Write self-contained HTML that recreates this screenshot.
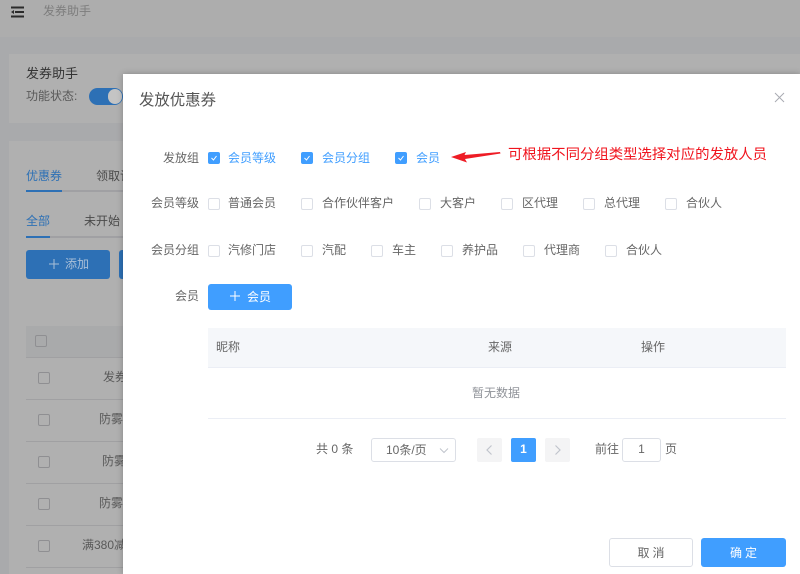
<!DOCTYPE html>
<html lang="zh"><head><meta charset="utf-8"><title>发券助手</title>
<style>
html,body{margin:0;padding:0;width:800px;height:574px;overflow:hidden;background:#a9aaac}
body{position:relative;font-family:"Liberation Sans","Noto Sans CJK SC",sans-serif;font-size:12px;color:#666}
.a{position:absolute;white-space:nowrap}
.t{position:absolute;white-space:nowrap;line-height:16px;height:16px}
.cb{position:absolute;width:10px;height:10px;border:1px solid #dcdfe6;border-radius:2px;background:#fff}
.cb.on{background:#409eff;border-color:#409eff}
.cb.on svg{position:absolute;left:-1px;top:-1px}
.bg{position:absolute;width:10px;height:10px;border:1px solid #8f8f92;border-radius:2px}
.blue{color:#409eff}
.line{position:absolute;height:1px;background:#a0a0a2;left:26px;width:100px}
</style></head><body>
<!-- background -->
<div class="a" style="left:0;top:0;width:800px;height:37px;background:#adadad"></div>
<svg class="a" style="left:10px;top:6px" width="15" height="12"><path d="M1 1.5H14M5 6H14M1 10.5H14" stroke="#2b2b2b" stroke-width="2" fill="none"/><path d="M1 6L4 4V8Z" fill="#2b2b2b"/></svg>
<div class="t" style="left:43px;top:3px;color:#7d7d7d">发券助手</div>
<div class="a" style="left:9px;top:54px;width:791px;height:69px;background:#b0b0b0"></div>
<div class="t" style="left:26px;top:66px;color:#333;font-size:13px">发券助手</div>
<div class="t" style="left:26px;top:88px;color:#595959">功能状态:</div>
<div class="a" style="left:89px;top:88px;width:34px;height:17px;border-radius:9px;background:#2d70b5"></div>
<div class="a" style="left:108px;top:89px;width:14px;height:15px;border-radius:8px;background:#c4c4c4"></div>
<div class="a" style="left:9px;top:141px;width:791px;height:433px;background:#b0b0b0"></div>
<div class="t" style="left:26px;top:168px;color:#2d70b5">优惠券</div>
<div class="t" style="left:96px;top:168px;color:#4a4a4a">领取记录</div>
<div class="a" style="left:26px;top:190px;width:97px;height:2px;background:#a0a0a3"></div>
<div class="a" style="left:26px;top:190px;width:36px;height:2px;background:#2d70b5"></div>
<div class="t" style="left:26px;top:213px;color:#2d70b5">全部</div>
<div class="t" style="left:84px;top:213px;color:#4a4a4a">未开始</div>
<div class="a" style="left:26px;top:236px;width:97px;height:2px;background:#a0a0a3"></div>
<div class="a" style="left:26px;top:236px;width:24px;height:2px;background:#2d70b5"></div>
<div class="a" style="left:26px;top:250px;width:84px;height:29px;border-radius:3px;background:#2d70b5"></div>
<svg class="a" style="left:48px;top:258px" width="12" height="12"><path d="M6 1V11M1 6H11" stroke="#a9bfd8" stroke-width="1" fill="none"/></svg>
<div class="t" style="left:65px;top:256px;color:#a9bfd8">添加</div>
<div class="a" style="left:119px;top:250px;width:10px;height:29px;border-radius:3px 0 0 3px;background:#2d70b5"></div>
<div class="a" style="left:26px;top:326px;width:100px;height:31px;background:#a9aaab"></div>
<div class="bg" style="left:35px;top:335px"></div>
<div class="line" style="top:357px"></div>
<div class="line" style="top:399px"></div>
<div class="line" style="top:441px"></div>
<div class="line" style="top:483px"></div>
<div class="line" style="top:525px"></div>
<div class="line" style="top:567px"></div>
<div class="bg" style="left:38px;top:372px"></div>
<div class="bg" style="left:38px;top:414px"></div>
<div class="bg" style="left:38px;top:456px"></div>
<div class="bg" style="left:38px;top:498px"></div>
<div class="bg" style="left:38px;top:540px"></div>
<div class="t" style="left:103px;top:369px;color:#595959">发券</div>
<div class="t" style="left:99px;top:411px;color:#595959">防雾</div>
<div class="t" style="left:102px;top:453px;color:#595959">防雾</div>
<div class="t" style="left:99px;top:495px;color:#595959">防雾</div>
<div class="t" style="left:82px;top:537px;color:#595959">满380减</div>

<!-- dialog -->
<div class="a" style="left:123px;top:74px;width:677px;height:500px;background:#fff;box-shadow:0 0 6px rgba(0,0,0,.25)"></div>
<div class="t" style="left:139px;top:92px;font-size:15.4px;line-height:18px;height:18px;color:#555">发放优惠券</div>
<svg class="a" style="left:774px;top:92px" width="11" height="11"><path d="M1 1L10 10M10 1L1 10" stroke="#a9abb2" stroke-width="1" fill="none"/></svg>

<div class="t" style="left:163px;top:150px">发放组</div>
<div class="cb on" style="left:208px;top:152px"><svg width="12" height="12"><path d="M3.5 6L5.5 8L8.5 4" stroke="#fff" stroke-width="1" fill="none"/></svg></div>
<div class="t blue" style="left:228px;top:150px">会员等级</div>
<div class="cb on" style="left:301px;top:152px"><svg width="12" height="12"><path d="M3.5 6L5.5 8L8.5 4" stroke="#fff" stroke-width="1" fill="none"/></svg></div>
<div class="t blue" style="left:322px;top:150px">会员分组</div>
<div class="cb on" style="left:395px;top:152px"><svg width="12" height="12"><path d="M3.5 6L5.5 8L8.5 4" stroke="#fff" stroke-width="1" fill="none"/></svg></div>
<div class="t blue" style="left:416px;top:150px">会员</div>
<svg class="a" style="left:450px;top:148px" width="54" height="16"><path d="M1 9L16 4L14.5 7L50 4L50.5 5.5L15 11L17 14.5Z" fill="#ee1c25"/></svg>
<div class="t" style="left:508px;top:147px;font-size:14.4px;color:#f0141e">可根据不同分组类型选择对应的发放人员</div>

<div class="t" style="left:151px;top:195px">会员等级</div>
<div class="cb" style="left:208px;top:198px"></div><div class="t" style="left:228px;top:195px">普通会员</div>
<div class="cb" style="left:301px;top:198px"></div><div class="t" style="left:322px;top:195px">合作伙伴客户</div>
<div class="cb" style="left:419px;top:198px"></div><div class="t" style="left:440px;top:195px">大客户</div>
<div class="cb" style="left:501px;top:198px"></div><div class="t" style="left:522px;top:195px">区代理</div>
<div class="cb" style="left:583px;top:198px"></div><div class="t" style="left:604px;top:195px">总代理</div>
<div class="cb" style="left:665px;top:198px"></div><div class="t" style="left:686px;top:195px">合伙人</div>

<div class="t" style="left:151px;top:242px">会员分组</div>
<div class="cb" style="left:208px;top:245px"></div><div class="t" style="left:228px;top:242px">汽修门店</div>
<div class="cb" style="left:301px;top:245px"></div><div class="t" style="left:322px;top:242px">汽配</div>
<div class="cb" style="left:371px;top:245px"></div><div class="t" style="left:392px;top:242px">车主</div>
<div class="cb" style="left:441px;top:245px"></div><div class="t" style="left:462px;top:242px">养护品</div>
<div class="cb" style="left:523px;top:245px"></div><div class="t" style="left:544px;top:242px">代理商</div>
<div class="cb" style="left:605px;top:245px"></div><div class="t" style="left:626px;top:242px">合伙人</div>

<div class="t" style="left:175px;top:288px">会员</div>
<div class="a" style="left:208px;top:284px;width:84px;height:26px;border-radius:3px;background:#409eff"></div>
<svg class="a" style="left:229px;top:290px" width="12" height="12"><path d="M6 1V11M1 6H11" stroke="#fff" stroke-width="1" fill="none"/></svg>
<div class="t" style="left:247px;top:289px;color:#fff">会员</div>

<div class="a" style="left:208px;top:328px;width:578px;height:39px;background:#f5f7fa"></div>
<div class="a" style="left:208px;top:367px;width:578px;height:1px;background:#ebeef5"></div>
<div class="t" style="left:216px;top:339px">昵称</div>
<div class="t" style="left:488px;top:339px">来源</div>
<div class="t" style="left:641px;top:339px">操作</div>
<div class="t" style="left:472px;top:385px;color:#909399">暂无数据</div>
<div class="a" style="left:208px;top:418px;width:578px;height:1px;background:#ebeef5"></div>

<div class="t" style="left:316px;top:441px">共 0 条</div>
<div class="a" style="left:371px;top:438px;width:83px;height:22px;border:1px solid #dcdfe6;border-radius:3px"></div>
<div class="t" style="left:386px;top:442px">10条/页</div>
<svg class="a" style="left:439px;top:447px" width="10" height="8"><path d="M1 1.5L5 5.5L9 1.5" stroke="#c0c4cc" stroke-width="1" fill="none"/></svg>
<div class="a" style="left:477px;top:438px;width:25px;height:24px;background:#f4f4f5;border-radius:2px"></div>
<svg class="a" style="left:485px;top:444px" width="9" height="12"><path d="M6.5 1.5L2 6L6.5 10.5" stroke="#c0c4cc" stroke-width="1.2" fill="none"/></svg>
<div class="a" style="left:511px;top:438px;width:25px;height:24px;background:#409eff;border-radius:2px;color:#fff;font-weight:bold;text-align:center;line-height:23px">1</div>
<div class="a" style="left:545px;top:438px;width:25px;height:24px;background:#f4f4f5;border-radius:2px"></div>
<svg class="a" style="left:553px;top:444px" width="9" height="12"><path d="M2.5 1.5L7 6L2.5 10.5" stroke="#c0c4cc" stroke-width="1.2" fill="none"/></svg>
<div class="t" style="left:595px;top:441px">前往</div>
<div class="a" style="left:622px;top:438px;width:37px;height:22px;border:1px solid #dcdfe6;border-radius:3px;text-align:center;line-height:21px">1</div>
<div class="t" style="left:665px;top:441px">页</div>

<div class="a" style="left:609px;top:538px;width:82px;height:27px;border:1px solid #dcdfe6;border-radius:3px;text-align:center;line-height:28px;letter-spacing:3px;text-indent:3px">取消</div>
<div class="a" style="left:701px;top:538px;width:85px;height:29px;background:#409eff;border-radius:3px;color:#fff;text-align:center;line-height:30px;letter-spacing:3px;text-indent:3px">确定</div>
</body></html>
